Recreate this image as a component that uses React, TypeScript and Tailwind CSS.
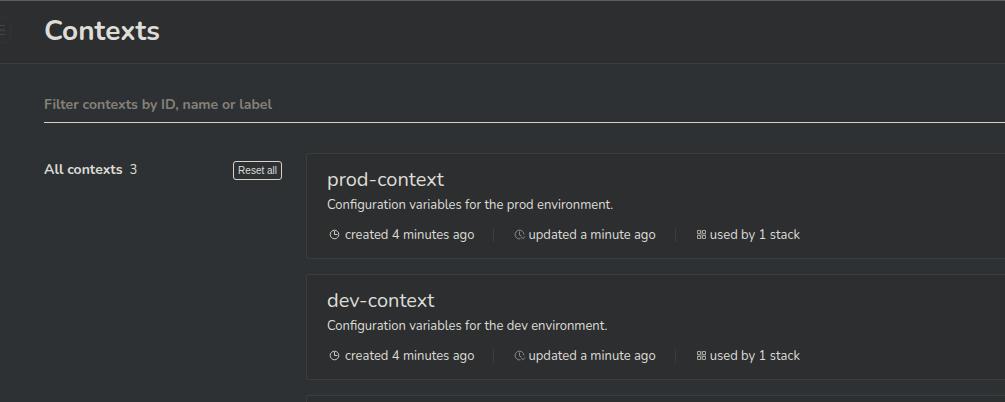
import React from "react";

type Context = { id: string; description: string; created: string; updated: string; usage: string };

const contexts: Context[] = [
  {
    id: "prod-context",
    description: "Configuration variables for the prod environment.",
    created: "created 4 minutes ago",
    updated: "updated a minute ago",
    usage: "used by 1 stack",
  },
  {
    id: "dev-context",
    description: "Configuration variables for the dev environment.",
    created: "created 4 minutes ago",
    updated: "updated a minute ago",
    usage: "used by 1 stack",
  },
];

function ClockIcon() {
  return (
    <svg className="size-3 shrink-0 text-[#cfcbc2]" viewBox="0 0 12 12" fill="none" stroke="currentColor" aria-hidden="true">
      <circle cx="5.5" cy="5.5" r="4.3" />
      <path d="M5.5 2v3.5h3" />
    </svg>
  );
}

function UpdatedIcon() {
  return (
    <svg className="size-3 shrink-0 text-[#8b8986]" viewBox="0 0 12 12" fill="none" stroke="currentColor" aria-hidden="true">
      <path d="M6.5 9.8A4.4 4.4 0 1 1 9.9 5.5" />
      <path d="M5.5 2.5v3.5l2 1" />
      <path d="M7.2 7.8l1.8 2 2-2.4" />
    </svg>
  );
}

function StackIcon() {
  return (
    <svg className="size-[10px] shrink-0 text-[#aaa6a1]" viewBox="0 0 10 10" fill="none" stroke="currentColor" aria-hidden="true">
      <path d="M.5 .5h3v3h-3zM5.5 .5h3v3h-3zM.5 5.5h3v3h-3zM5.5 5.5h3v3h-3z" />
      <path d="M4.5 0v9M0 4.5h9" strokeOpacity="0.35" />
    </svg>
  );
}

function ContextCard({ context }: { context: Context }) {
  return (
    <li className="rounded-l-[3px] border border-r-0 border-[#3b3e3f] bg-[#2c2e2f] px-5 pt-3 pb-[11px]">
      <h2 className="text-[20px] leading-7">{context.id}</h2>
      <p className="mt-px text-[13px] leading-5">{context.description}</p>
      <ul className="mt-2 flex items-center text-[13px] leading-6">
        <li className="flex items-center gap-1 pl-[2px]">
          <ClockIcon />
          {context.created}
        </li>
        <li className="ml-[19px] flex items-center gap-[2px]">
          <span className="mr-[18px] h-[14px] w-px bg-[#3b3e3f]" />
          <UpdatedIcon />
          {context.updated}
        </li>
        <li className="ml-[19px] flex items-center gap-[3px]">
          <span className="mr-[18px] h-[14px] w-px bg-[#3b3e3f]" />
          <StackIcon />
          {context.usage}
        </li>
      </ul>
    </li>
  );
}

export default function App() {
  return (
    <div className="flex h-screen flex-col overflow-hidden bg-[#2d3134] font-['Nunito','Noto_Sans',sans-serif] text-[#dddcd7]">
      <header className="flex h-16 shrink-0 items-center border-t border-b border-t-[#5c6061] border-b-[#3b3d3e] bg-[#2c2e2f]">
        <button type="button" aria-label="Toggle menu" className="mb-1 flex h-[26px] w-[11px] items-center justify-start rounded-r-md border border-l-0 border-[#313334] text-[#424445]">
          <svg className="h-3 w-[6px]" viewBox="0 0 6 12" fill="none" stroke="currentColor" aria-hidden="true">
            <path d="M0 1.5h5M0 10.5h5" />
            <path d="M0 5.5h1v2M2.5 7.5v-2h2v2" />
          </svg>
        </button>
        <h1 className="ml-[33px] pb-[2px] text-[28px] leading-9 font-bold">Contexts</h1>
      </header>
      <main className="flex min-h-0 flex-1 flex-col pt-[22px] pl-11">
        <input
          type="text"
          aria-label="Filter contexts"
          placeholder="Filter contexts by ID, name or label"
          className="h-[37px] w-full shrink-0 border-b border-[#d9d2bd] bg-transparent text-[14px] font-bold outline-none placeholder:text-[#858179]"
        />
        <div className="flex pt-[30px]">
          <aside className="flex w-[238px] shrink-0 items-start justify-between pt-2">
            <h2 className="text-[14px] leading-[18px] font-bold">
              All contexts <span className="ml-[3px] text-[13px] font-normal">3</span>
            </h2>
            <button type="button" className="h-[19px] rounded-[3px] border border-[#d9d2c8] px-1 font-['Liberation_Sans',sans-serif] text-[10px] leading-4">
              Reset all
            </button>
          </aside>
          <ul className="ml-6 flex flex-1 flex-col gap-[15px]">
            {contexts.map((context) => (
              <ContextCard key={context.id} context={context} />
            ))}
            <li className="h-[106px] rounded-l-[3px] border border-r-0 border-[#3b3e3f] bg-[#2c2e2f]" />
          </ul>
        </div>
      </main>
    </div>
  );
}
